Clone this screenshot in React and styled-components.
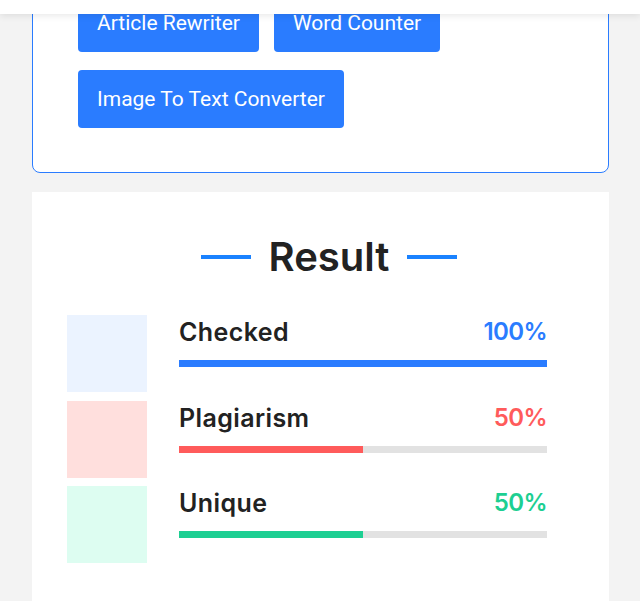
import React from 'react';
import styled, { createGlobalStyle } from 'styled-components';

const Global = createGlobalStyle`
    html, body {
        margin: 0;
        padding: 0;
        background: #f3f3f3;
    }
    * { box-sizing: border-box; }
`;

const Header = styled.div`
    position: fixed;
    top: 0;
    left: 0;
    right: 0;
    height: 14px;
    background: #fff;
    box-shadow: 0 2px 7px rgba(0, 0, 0, 0.09);
    z-index: 5;
`;

const Page = styled.div`
    display: flex;
    flex-direction: column;
    gap: 19px;
    width: 577px;
    margin: -52px 0 0 32px;
`;

const ToolCard = styled.div`
    background: #fff;
    border: 1px solid #2a7cff;
    border-radius: 8px;
    padding: 45px 45px 44px;
`;

const Buttons = styled.div`
    display: flex;
    flex-wrap: wrap;
    gap: 18px 15px;
`;

const ToolButton = styled.button`
    border: none;
    background: #2a7cff;
    color: #fff;
    font-family: Roboto, sans-serif;
    font-size: 21px;
    line-height: 24px;
    padding: 17px 19px;
    border-radius: 4px;
`;

const ResultCard = styled.div`
    background: #fff;
    padding: 41px 62px 40px 35px;
    min-height: 420px;
`;

const Heading = styled.div`
    display: flex;
    align-items: center;
    justify-content: center;
    gap: 18px;
    margin-bottom: 34px;
    padding-left: 44px;
`;

const Dash = styled.span`
    width: 50px;
    height: 4px;
    background: #1a82ff;
`;

const Title = styled.h2`
    margin: 0;
    font-family: Inter, sans-serif;
    font-weight: 600;
    font-size: 40px;
    line-height: 48px;
    color: #222;
`;

const Rows = styled.div`
    display: flex;
    flex-direction: column;
    gap: 8.5px;
`;

const Row = styled.div`
    display: flex;
    align-items: flex-start;
    gap: 32px;
`;

const Swatch = styled.div`
    width: 80px;
    height: 77px;
    background: ${p => p.tint};
`;

const Info = styled.div`
    flex: 1;
    padding-top: 1px;
`;

const Line = styled.div`
    display: flex;
    justify-content: space-between;
    font-family: Inter, sans-serif;
    font-weight: 600;
    font-size: 25px;
    line-height: 32px;
`;

const Label = styled.span`
    color: #222;
    letter-spacing: 0.4px;
`;

const Percent = styled.span`
    color: ${p => p.color};
    font-size: 24px;
    letter-spacing: -0.6px;
`;

const Track = styled.div`
    margin-top: 12px;
    height: 7px;
    background: #e2e2e2;
`;

const Fill = styled.div`
    height: 100%;
    background: ${p => p.color};
`;

const results = [
    { label: 'Checked', value: 100, color: '#2a7cff', tint: '#ebf3ff' },
    { label: 'Plagiarism', value: 50, color: '#ff5b5b', tint: '#ffdfdd' },
    { label: 'Unique', value: 50, color: '#1dcf92', tint: '#ddfdf1' },
];

const App = () => {
    return <>
        <Global />
        <Header />
        <Page>
            <ToolCard>
                <Buttons>
                    <ToolButton>Article Rewriter</ToolButton>
                    <ToolButton>Word Counter</ToolButton>
                    <ToolButton>Image To Text Converter</ToolButton>
                </Buttons>
            </ToolCard>
            <ResultCard>
                <Heading>
                    <Dash />
                    <Title>Result</Title>
                    <Dash />
                </Heading>
                <Rows>
                    {results.map(r => (
                        <Row key={r.label}>
                            <Swatch tint={r.tint} />
                            <Info>
                                <Line>
                                    <Label>{r.label}</Label>
                                    <Percent color={r.color}>{r.value}%</Percent>
                                </Line>
                                <Track>
                                    <Fill color={r.color} style={{ width: `${r.value}%` }} />
                                </Track>
                            </Info>
                        </Row>
                    ))}
                </Rows>
            </ResultCard>
        </Page>
    </>
}

export default App;
